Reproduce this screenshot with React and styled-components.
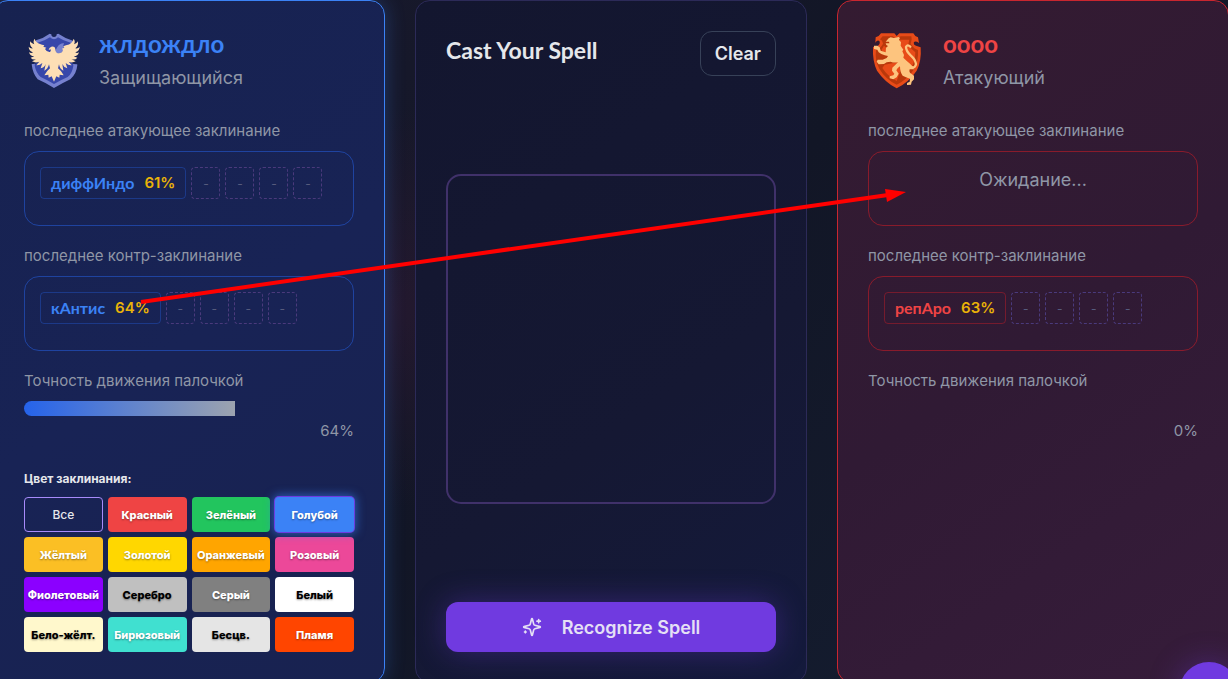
import React, { useState } from "react";
import styled, { createGlobalStyle, css } from "styled-components";

const GlobalStyle = createGlobalStyle`
  *, *::before, *::after { box-sizing: border-box; }
  body {
    margin: 0;
    overflow: hidden;
    font-family: Inter, "Noto Sans", sans-serif;
    color: #e5e7eb;
    background:
      radial-gradient(circle at 32% 45%, rgba(90, 30, 70, 0.22), transparent 22%),
      linear-gradient(135deg, #1a1a2e 0%, #121626 50%, #151f33 100%);
  }
  h2, h3, p { margin: 0; }
  button { font-family: inherit; cursor: pointer; }
`;

const display = css`
  font-family: Lato, "Open Sans", sans-serif;
`;

const Arena = styled.main`
  position: relative;
  display: grid;
  grid-template-columns: repeat(3, minmax(0, 1fr));
  gap: 30px;
  margin: 0 -1px 0 -7px;
`;

const tones = {
  blue: {
    text: "#3b82f6",
    edge: "#3b82f6",
    box: "rgba(37, 99, 235, 0.5)",
    chip: "rgba(37, 99, 235, 0.35)",
    fill: "linear-gradient(145deg, #172250 0%, #182355 50%, #182250 100%)",
    glow: "0 0 20px rgba(59, 130, 246, 0.3)",
  },
  red: {
    text: "#ef4444",
    edge: "#c9262f",
    box: "rgba(185, 28, 40, 0.65)",
    chip: "rgba(185, 28, 40, 0.5)",
    fill: "linear-gradient(145deg, #341b31 0%, #301a34 50%, #361c3a 100%)",
    glow: "none",
  },
  neutral: {
    text: "#e5e7eb",
    edge: "#2c2a58",
    fill: "linear-gradient(145deg, #13162f 0%, #151833 60%, #141a3c 100%)",
    glow: "none",
  },
};

const Panel = styled.section`
  display: flex;
  flex-direction: column;
  min-width: 0;
  padding: 30px;
  border: 1px solid ${(p) => tones[p.$tone].edge};
  border-radius: 15px;
  background: ${(p) => tones[p.$tone].fill};
  box-shadow: ${(p) => tones[p.$tone].glow};
`;

const PlayerHeader = styled.header`
  display: flex;
  align-items: center;
  gap: 15px;
  height: 60px;
  margin-bottom: 30px;
`;

const Crest = styled.svg`
  flex: none;
  width: 60px;
  height: 60px;
`;

const PlayerName = styled.h2`
  ${display}
  font-size: 24px;
  line-height: 28px;
  font-weight: 700;
  color: ${(p) => tones[p.$tone].text};
`;

const Role = styled.p`
  margin-top: 6px;
  font-size: 18px;
  line-height: 28px;
  color: #8f96a6;
`;

const Stat = styled.div`
  margin-bottom: 20px;
`;

const StatLabel = styled.h3`
  margin-bottom: 10px;
  font-size: 15px;
  line-height: 20px;
  font-weight: 400;
  color: #8f96a6;
`;

const SpellBox = styled.div`
  display: flex;
  align-items: flex-start;
  gap: 5px;
  min-height: 75px;
  padding: 15px;
  border: 1px solid ${(p) => tones[p.$tone].box};
  border-radius: 15px;
`;

const Chip = styled.div`
  display: flex;
  align-items: center;
  gap: 10px;
  height: 32px;
  padding: 0 10px;
  border: 1px solid ${(p) => tones[p.$tone].chip};
  border-radius: 4px;
  white-space: nowrap;
`;

const SpellName = styled.span`
  ${display}
  font-size: 16px;
  line-height: 24px;
  font-weight: 700;
  color: ${(p) => tones[p.$tone].text};
`;

const Score = styled.span`
  font-size: 15px;
  line-height: 24px;
  font-weight: 600;
  color: #eab308;
`;

const Slot = styled.div`
  display: grid;
  place-items: center;
  width: 29px;
  height: 32px;
  border: 1px dashed #4a3a7c;
  border-radius: 4px;
  font-size: 12px;
  color: #565b7d;
`;

const Waiting = styled.p`
  flex: 1;
  text-align: center;
  font-size: 18px;
  line-height: 26px;
  color: #8f96a6;
`;

const Track = styled.div`
  height: 15px;
  border-radius: 8px;
  overflow: hidden;
`;

const Fill = styled.div`
  height: 100%;
  background: linear-gradient(90deg, #2563eb, #9ca3af);
`;

const Percent = styled.p`
  margin-top: 5px;
  text-align: right;
  font-size: 15px;
  line-height: 20px;
  color: #8f96a6;
`;

const PaletteTitle = styled.h3`
  margin: 10px 0 10px;
  font-size: 12px;
  line-height: 16px;
  font-weight: 700;
`;

const Palette = styled.div`
  display: grid;
  grid-template-columns: repeat(4, minmax(0, 1fr));
  gap: 5px;
`;

const Swatch = styled.button`
  height: 35px;
  padding: 0;
  border: ${(p) => (p.$outline ? "1px solid #a78bfa" : "0")};
  border-radius: 4px;
  background: ${(p) => p.$fill};
  color: ${(p) => p.$ink};
  font-size: ${(p) => (p.$outline ? "12px" : "11px")};
  font-weight: ${(p) => (p.$outline ? 500 : 800)};
  white-space: nowrap;
  text-shadow: ${(p) => (p.$outline ? "none" : "0 1px 2px rgba(0, 0, 0, 0.4)")};
  ${(p) =>
    p.$active &&
    css`
      position: relative;
      box-shadow: 0 0 0 1px #6d3be0, 0 0 10px 2px rgba(59, 130, 246, 0.6);
    `}
`;

const CastHeader = styled.header`
  display: flex;
  align-items: flex-start;
  justify-content: space-between;
`;

const CastTitle = styled.h2`
  ${display}
  font-size: 23px;
  line-height: 38px;
  font-weight: 700;
`;

const ClearButton = styled.button`
  height: 45px;
  padding: 0 14px;
  border: 1px solid #374158;
  border-radius: 12px;
  background: transparent;
  color: #e5e7eb;
  font-size: 18px;
  font-weight: 600;
`;

const CanvasArea = styled.div`
  flex: 1;
  display: flex;
  align-items: center;
`;

const DrawingCanvas = styled.canvas`
  display: block;
  width: 100%;
  aspect-ratio: 1;
  border: 2px solid #40316a;
  border-radius: 15px;
`;

const RecognizeButton = styled.button`
  display: flex;
  align-items: center;
  justify-content: center;
  gap: 20px;
  height: 50px;
  border: 0;
  border-radius: 12px;
  background: #703ae0;
  color: #e5e0f5;
  font-size: 18px;
  font-weight: 600;
  box-shadow: 0 0 30px rgba(112, 58, 224, 0.35);
`;

const Pointer = styled.svg`
  position: absolute;
  left: 7px;
  top: 0;
  width: 1228px;
  height: 400px;
  pointer-events: none;
`;

const FloatingButton = styled.button`
  position: fixed;
  right: -11px;
  bottom: -43px;
  width: 60px;
  height: 60px;
  border: 0;
  border-radius: 50%;
  background: #703ae0;
  box-shadow: 0 0 30px rgba(112, 58, 224, 0.35);
`;

function SparklesIcon() {
  return (
    <svg
      width="20"
      height="20"
      viewBox="0 0 24 24"
      fill="none"
      stroke="currentColor"
      strokeWidth="2"
      strokeLinecap="round"
      strokeLinejoin="round"
      aria-hidden="true"
    >
      <path d="M9.937 15.5A2 2 0 0 0 8.5 14.063l-6.135-1.582a.5.5 0 0 1 0-.962L8.5 9.936A2 2 0 0 0 9.937 8.5l1.582-6.135a.5.5 0 0 1 .963 0L14.063 8.5A2 2 0 0 0 15.5 9.937l6.135 1.581a.5.5 0 0 1 0 .964L15.5 14.063a2 2 0 0 0-1.437 1.437l-1.582 6.135a.5.5 0 0 1-.963 0z" />
      <path d="M20 3v4M22 5h-4M4 17v2M5 18H3" />
    </svg>
  );
}

function EagleCrest() {
  return (
    <Crest viewBox="12 18 180 180" aria-hidden="true">
      <path fill="#7681cf" d="M89 26 L94 28 Q94 36 102 36 Q110 36 110 28 L115 26 Q135 40 159 47 L168 115 Q172 116 172 120 Q170 146 151 163 Q130 173 102 189 Q76 173 53 163 Q38 146 35 118 L43 115 L48 46 Q70 40 89 26Z" />
      <path fill="#3747aa" d="M90 37 Q102 49 114 37 Q130 48 152 53 L160 122 Q157 145 143 156 Q122 165 102 177 Q82 165 62 156 Q48 143 44 122 L53 53 Q74 48 90 37Z" />
      <path fill="#7681cf" d="M112 66 Q121 53 132 55 Q128 61 132 70 Q130 81 119 87 Q108 84 106 77Z" />
      <path fill="#182353" d="M28 89 L60 89 L58 110 Q46 119 33 117Z M146 89 L176 89 L172 118 Q160 119 150 110Z" />
      <path fill="#fddfb5" d="M44 41 Q47 52 58 56 L66 59 L73 61 L70 65 L79 68 L75 72 Q80 82 90 81 Q94 78 92 73 L86 75 Q87 68 94 65 Q105 63 106 72 Q105 80 111 84 Q125 88 129 75 L126 71 L133 68 L130 64 L138 61 Q158 56 161 41 Q167 50 162 58 Q170 57 173 49 Q177 61 166 70 Q174 72 179 65 Q179 77 166 82 Q172 86 177 81 Q174 94 161 94 L172 98 Q166 106 154 103 L167 109 Q156 115 146 110 L155 121 Q145 122 137 114 L142 130 Q131 127 127 117 L130 137 Q119 132 117 118 L114 130 Q125 138 131 151 L119 149 L118 158 L109 154 L102 170 L95 154 L86 158 L85 149 L73 151 Q80 138 90 130 L87 118 Q84 132 73 137 L77 117 Q73 128 62 130 L67 114 Q59 122 49 121 L58 110 Q47 115 36 109 L49 103 Q38 106 32 98 L43 94 Q30 94 27 81 Q33 87 39 82 Q26 77 26 65 Q31 71 38 70 Q27 61 31 49 Q35 57 43 58 Q38 50 44 41Z" />
    </Crest>
  );
}

function LionCrest() {
  return (
    <Crest viewBox="12 18 180 180" aria-hidden="true">
      <path fill="#e84b18" d="M51 25 L91 25 L98 33 L106 25 L148 25 Q152 34 162 37 L165 54 Q153 46 149 53 Q149 60 156 62 L170 67 Q173 109 158 137 Q135 171 98 190 Q62 171 39 137 Q25 109 27 66 L42 62 Q50 56 46 48 Q40 44 34 53 L35 37Q46 34 51 25Z" />
      <path fill="#b9380b" d="M56 34 L86 34 L98 42 L110 34 L142 34 L143 43 L140 57 Q151 73 162 75 Q164 106 151 131 Q132 162 98 179 Q64 162 46 131 Q32 107 36 76 Q50 70 57 56 Q56 46 48 43Z" />
      <path fill="#e84b18" d="M108 44 L136 44 L133 58 Q142 74 154 82 Q154 108 142 128 L112 130 L98 168 Q70 153 55 129 L62 119 L100 112Z M60 62 L68 70 L64 86 L52 76Z" />
      <path fill="#fdc47e" d="M65 50 L74 40 L80 37 L90 39 L104 36 L108 39 L105 44 L111 52 L110 62 L118 74 L115 79 L120 90 L118 98 Q128 108 138 116 Q148 124 150 133 L137 133 Q134 143 142 146 L150 152 L150 163 L143 170 L141 179 L129 180 L129 174 L137 170 L138 161 L126 157 L116 152 Q108 142 108 124 Q100 129 97 136 L104 146 L98 157 L88 163 L77 160 L77 154 L88 151 L91 146 L84 137 L85 128 L96 118 L102 111 Q92 115 80 110 L68 112 L60 117 L44 118 L38 110 L41 104 L56 104 L68 99 L72 93 L62 91 L52 87 L44 82 L40 74 L30 72 L30 62 L40 62 L47 67 L50 77 L65 82 L66 68 L72 63 L67 60 L65 55 L76 55 L75 50Z" />
      <path fill="none" stroke="#fdc47e" strokeWidth="7" strokeLinecap="round" d="M139 65 Q130 57 126 66 Q126 78 140 91 Q154 103 156 117 Q154 129 143 127" />
    </Crest>
  );
}

function SpellHistory({ tone, label, spell, score }) {
  return (
    <Stat>
      <StatLabel>{label}</StatLabel>
      <SpellBox $tone={tone}>
        {spell ? (
          <>
            <Chip $tone={tone}>
              <SpellName $tone={tone}>{spell}</SpellName>
              <Score>{score}%</Score>
            </Chip>
            {[0, 1, 2, 3].map((n) => (
              <Slot key={n}>-</Slot>
            ))}
          </>
        ) : (
          <Waiting>Ожидание...</Waiting>
        )}
      </SpellBox>
    </Stat>
  );
}

function Player({ tone, crest, name, role, attack, counter, accuracy, children }) {
  return (
    <Panel $tone={tone}>
      <PlayerHeader>
        {crest}
        <div>
          <PlayerName $tone={tone}>{name}</PlayerName>
          <Role>{role}</Role>
        </div>
      </PlayerHeader>
      <SpellHistory tone={tone} label="последнее атакующее заклинание" {...attack} />
      <SpellHistory tone={tone} label="последнее контр-заклинание" {...counter} />
      <Stat>
        <StatLabel>Точность движения палочкой</StatLabel>
        <Track role="progressbar" aria-label="Точность движения палочкой" aria-valuenow={accuracy}>
          <Fill style={{ width: `${accuracy}%` }} />
        </Track>
        <Percent>{accuracy}%</Percent>
      </Stat>
      {children}
    </Panel>
  );
}

const colors = [
  ["Все", "transparent", "#e5e7eb"],
  ["Красный", "#ef4444", "#fff"],
  ["Зелёный", "#22c55e", "#fff"],
  ["Голубой", "#3b82f6", "#fff"],
  ["Жёлтый", "#fbbf24", "#fff"],
  ["Золотой", "#ffd700", "#fff"],
  ["Оранжевый", "#ffa500", "#fff"],
  ["Розовый", "#ec4899", "#fff"],
  ["Фиолетовый", "#8b00ff", "#fff"],
  ["Серебро", "#c0c0c0", "#000"],
  ["Серый", "#808080", "#fff"],
  ["Белый", "#ffffff", "#000"],
  ["Бело-жёлт.", "#fff8cc", "#000"],
  ["Бирюзовый", "#40e0d0", "#fff"],
  ["Бесцв.", "#e5e5e5", "#000"],
  ["Пламя", "#ff4500", "#fff"],
];

export default function App() {
  const [color, setColor] = useState("Голубой");
  return (
    <>
      <GlobalStyle />
      <Arena>
        <Player
          tone="blue"
          crest={<EagleCrest />}
          name="жлдождло"
          role="Защищающийся"
          attack={{ spell: "диффИндо", score: 61 }}
          counter={{ spell: "кАнтис", score: 64 }}
          accuracy={64}
        >
          <PaletteTitle>Цвет заклинания:</PaletteTitle>
          <Palette>
            {colors.map(([name, fill, ink]) => (
              <Swatch
                key={name}
                type="button"
                $fill={fill}
                $ink={ink}
                $outline={fill === "transparent"}
                $active={name === color}
                aria-pressed={name === color}
                onClick={() => setColor(name)}
              >
                {name}
              </Swatch>
            ))}
          </Palette>
        </Player>

        <Panel $tone="neutral">
          <CastHeader>
            <CastTitle>Cast Your Spell</CastTitle>
            <ClearButton type="button">Clear</ClearButton>
          </CastHeader>
          <CanvasArea>
            <DrawingCanvas width="326" height="326" aria-label="Cast Your Spell" />
          </CanvasArea>
          <RecognizeButton type="button">
            <SparklesIcon />
            Recognize Spell
          </RecognizeButton>
        </Panel>

        <Player
          tone="red"
          crest={<LionCrest />}
          name="оооо"
          role="Атакующий"
          attack={{}}
          counter={{ spell: "репАро", score: 63 }}
          accuracy={0}
        />

        <Pointer viewBox="0 0 1228 400" aria-hidden="true">
          <path d="M141 302 L888 195" stroke="#ff0000" strokeWidth="4" />
          <path d="M885 189 L906 192 L887 202Z" fill="#ff0000" />
        </Pointer>
      </Arena>
      <FloatingButton type="button" aria-label="Menu" />
    </>
  );
}
